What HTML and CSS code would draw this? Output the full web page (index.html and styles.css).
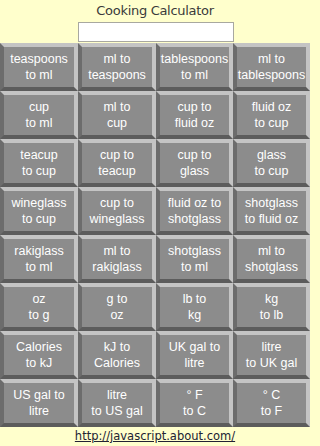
FILE: index.html
```html
<!DOCTYPE html>
<html>
<head>
<meta charset="utf-8">
<link rel="stylesheet" href="styles.css">
</head>
<body>
<div class="page">
  <div class="title">Cooking Calculator</div>
  <div class="field-row"><input class="field" type="text"></div>
  <div class="grid">
    <div class="btn">teaspoons<br>to ml</div>
    <div class="btn">ml to<br>teaspoons</div>
    <div class="btn">tablespoons<br>to ml</div>
    <div class="btn">ml to<br>tablespoons</div>
    <div class="btn">cup<br>to ml</div>
    <div class="btn">ml to<br>cup</div>
    <div class="btn">cup to<br>fluid oz</div>
    <div class="btn">fluid oz<br>to cup</div>
    <div class="btn">teacup<br>to cup</div>
    <div class="btn">cup to<br>teacup</div>
    <div class="btn">cup to<br>glass</div>
    <div class="btn">glass<br>to cup</div>
    <div class="btn">wineglass<br>to cup</div>
    <div class="btn">cup to<br>wineglass</div>
    <div class="btn">fluid oz to<br>shotglass</div>
    <div class="btn">shotglass<br>to fluid oz</div>
    <div class="btn">rakiglass<br>to ml</div>
    <div class="btn">ml to<br>rakiglass</div>
    <div class="btn">shotglass<br>to ml</div>
    <div class="btn">ml to<br>shotglass</div>
    <div class="btn">oz<br>to g</div>
    <div class="btn">g to<br>oz</div>
    <div class="btn">lb to<br>kg</div>
    <div class="btn">kg<br>to lb</div>
    <div class="btn">Calories<br>to kJ</div>
    <div class="btn">kJ to<br>Calories</div>
    <div class="btn">UK gal to<br>litre</div>
    <div class="btn">litre<br>to UK gal</div>
    <div class="btn">US gal to<br>litre</div>
    <div class="btn">litre<br>to US gal</div>
    <div class="btn">° F<br>to C</div>
    <div class="btn">° C<br>to F</div>
  </div>
  <div class="footer"><a class="link" href="#">http://javascript.about.com/</a></div>
</div>
</body>
</html>
```

FILE: styles.css
```css
html, body {
  margin: 0;
  padding: 0;
  background: #ffffcc;
}
.page {
  width: 310px;
  height: 446px;
  display: flex;
  flex-direction: column;
  background: #ffffcc;
}
.title {
  height: 22px;
  line-height: 22px;
  text-align: center;
  font-family: "DejaVu Sans", sans-serif;
  font-size: 13px;
  color: #3a3a3a;
  letter-spacing: -0.3px;
}
.field-row {
  display: flex;
  justify-content: center;
  height: 21px;
}
.field {
  box-sizing: border-box;
  width: 156px;
  height: 20px;
  margin: 0;
  border: 1px solid #a8a8a0;
  background: #ffffff;
  padding: 0;
  margin-left: 1px;
}
.grid {
  display: grid;
  grid-template-columns: 78px 78px 77px 77px;
  grid-auto-rows: 48px;
  background: #505050;
}
.btn {
  box-sizing: border-box;
  border-style: solid;
  border-width: 4px;
  border-top-color: #c4c4c4;
  border-right-color: #c4c4c4;
  border-bottom-color: #5c5c5c;
  border-left-color: #6c6c6c;
  background: #8c8c8c;
  color: #ffffff;
  font-family: "Liberation Sans", sans-serif;
  font-size: 12.5px;
  line-height: 16px;
  text-align: center;
  display: flex;
  align-items: center;
  justify-content: center;
}
.footer {
  flex: 1;
  text-align: center;
  font-family: "DejaVu Sans", sans-serif;
  font-size: 11.5px;
  line-height: 18px;
}
.link {
  color: #222233;
  text-decoration: underline;
}
```
